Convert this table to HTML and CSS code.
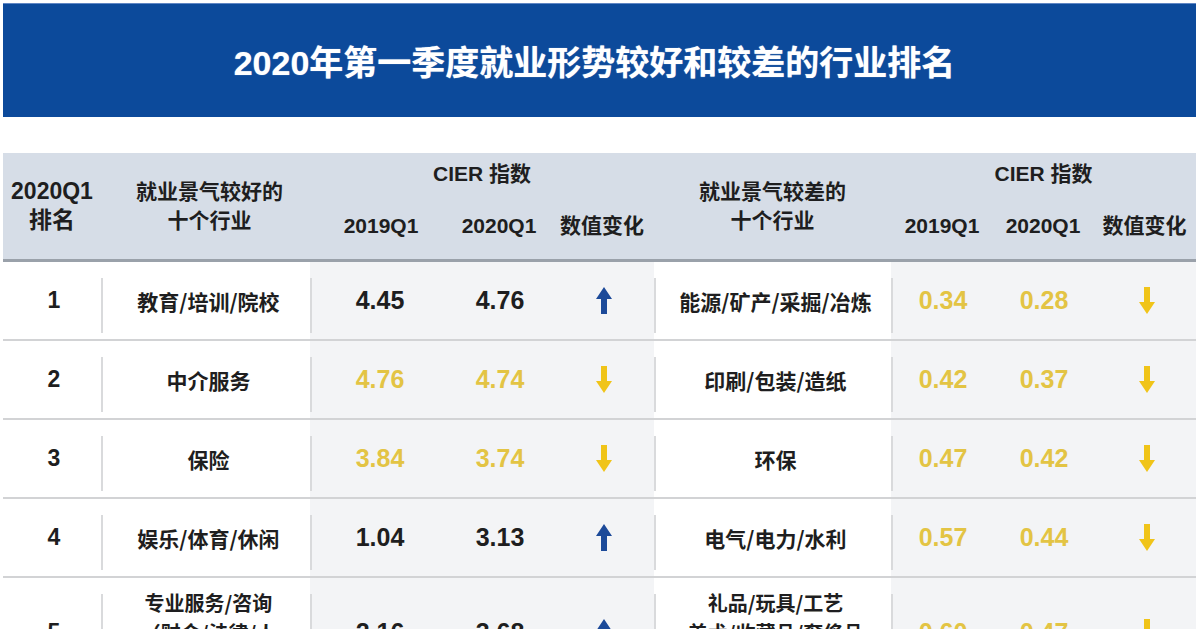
FILE: index.html
```html
<!DOCTYPE html>
<html lang="zh-CN">
<head>
<meta charset="utf-8">
<title>2020年第一季度就业形势较好和较差的行业排名</title>
<link rel="stylesheet" href="styles.css">
</head>
<body>
<div class="page">
  <header class="banner">
    <h1>2020年第一季度就业形势较好和较差的行业排名</h1>
  </header>

  <div class="table">
    <div class="thead">
      <div class="h-cell h-rank">2020Q1<br>排名</div>
      <div class="h-cell h-name">就业景气较好的<br>十个行业</div>
      <div class="h-cell h-cier">CIER 指数</div>
      <div class="h-cell h-sub c3">2019Q1</div>
      <div class="h-cell h-sub c4">2020Q1</div>
      <div class="h-cell h-sub c5">数值变化</div>
      <div class="h-cell h-name2">就业景气较差的<br>十个行业</div>
      <div class="h-cell h-cier2">CIER 指数</div>
      <div class="h-cell h-sub c7">2019Q1</div>
      <div class="h-cell h-sub c8">2020Q1</div>
      <div class="h-cell h-sub c9">数值变化</div>
    </div>

    <div class="row">
      <div class="cell w rank">1</div>
      <div class="cell w line name">教育/培训/院校</div>
      <div class="cell g line num">4.45</div>
      <div class="cell g num">4.76</div>
      <div class="cell g"><svg class="arrow up" viewBox="0 0 16 27"><path d="M8 0 L16 12 L11 12 L11 27 L5 27 L5 12 L0 12 Z"/></svg></div>
      <div class="cell w line name">能源/矿产/采掘/冶炼</div>
      <div class="cell g line num y">0.34</div>
      <div class="cell g num y">0.28</div>
      <div class="cell g"><svg class="arrow down" viewBox="0 0 16 27"><path d="M5 0 L11 0 L11 15 L16 15 L8 27 L0 15 L5 15 Z"/></svg></div>
    </div>

    <div class="row">
      <div class="cell w rank">2</div>
      <div class="cell w line name">中介服务</div>
      <div class="cell g line num y">4.76</div>
      <div class="cell g num y">4.74</div>
      <div class="cell g"><svg class="arrow down" viewBox="0 0 16 27"><path d="M5 0 L11 0 L11 15 L16 15 L8 27 L0 15 L5 15 Z"/></svg></div>
      <div class="cell w line name">印刷/包装/造纸</div>
      <div class="cell g line num y">0.42</div>
      <div class="cell g num y">0.37</div>
      <div class="cell g"><svg class="arrow down" viewBox="0 0 16 27"><path d="M5 0 L11 0 L11 15 L16 15 L8 27 L0 15 L5 15 Z"/></svg></div>
    </div>

    <div class="row">
      <div class="cell w rank">3</div>
      <div class="cell w line name">保险</div>
      <div class="cell g line num y">3.84</div>
      <div class="cell g num y">3.74</div>
      <div class="cell g"><svg class="arrow down" viewBox="0 0 16 27"><path d="M5 0 L11 0 L11 15 L16 15 L8 27 L0 15 L5 15 Z"/></svg></div>
      <div class="cell w line name">环保</div>
      <div class="cell g line num y">0.47</div>
      <div class="cell g num y">0.42</div>
      <div class="cell g"><svg class="arrow down" viewBox="0 0 16 27"><path d="M5 0 L11 0 L11 15 L16 15 L8 27 L0 15 L5 15 Z"/></svg></div>
    </div>

    <div class="row">
      <div class="cell w rank">4</div>
      <div class="cell w line name">娱乐/体育/休闲</div>
      <div class="cell g line num">1.04</div>
      <div class="cell g num">3.13</div>
      <div class="cell g"><svg class="arrow up" viewBox="0 0 16 27"><path d="M8 0 L16 12 L11 12 L11 27 L5 27 L5 12 L0 12 Z"/></svg></div>
      <div class="cell w line name">电气/电力/水利</div>
      <div class="cell g line num y">0.57</div>
      <div class="cell g num y">0.44</div>
      <div class="cell g"><svg class="arrow down" viewBox="0 0 16 27"><path d="M5 0 L11 0 L11 15 L16 15 L8 27 L0 15 L5 15 Z"/></svg></div>
    </div>

    <div class="row tall">
      <div class="cell w rank">5</div>
      <div class="cell w line name multi">专业服务/咨询<br>（财会/法律/人<br>力资源）</div>
      <div class="cell g line num">2.16</div>
      <div class="cell g num">3.68</div>
      <div class="cell g"><svg class="arrow up" viewBox="0 0 16 27"><path d="M8 0 L16 12 L11 12 L11 27 L5 27 L5 12 L0 12 Z"/></svg></div>
      <div class="cell w line name multi wide">礼品/玩具/工艺<br>美术/收藏品/奢侈品<br>/珠宝</div>
      <div class="cell g line num y">0.60</div>
      <div class="cell g num y">0.47</div>
      <div class="cell g"><svg class="arrow down" viewBox="0 0 16 27"><path d="M5 0 L11 0 L11 15 L16 15 L8 27 L0 15 L5 15 Z"/></svg></div>
    </div>
  </div>
</div>
</body>
</html>
```

FILE: styles.css
```css
:root {
  --cols: 98px 209px 138px 102px 104px 237px 102px 100px 103px;
}

* { box-sizing: border-box; }

body {
  margin: 0;
  background: #ffffff;
  font-family: "Liberation Sans", "Noto Sans CJK SC", sans-serif;
  color: #1e1e20;
}

.page {
  padding: 3px 4px 0 3px;
}

.banner {
  height: 114px;
  background: #0c4a9b;
  border-top: 1px solid #5f86c4;
  display: flex;
  align-items: center;
  justify-content: center;
}

.banner h1 {
  margin: 0;
  padding-top: 4px;
  padding-right: 10px;
  color: #ffffff;
  font-family: "Liberation Sans", "Noto Sans CJK SC", sans-serif;
  font-weight: 700;
  font-size: 34px;
  line-height: 1;
  letter-spacing: 0;
  text-shadow: 0 0 1px rgba(255, 255, 255, 0.6);
}

.table {
  margin-top: 36px;
}

.thead {
  display: grid;
  grid-template-columns: var(--cols);
  grid-template-rows: 38px 68px;
  background: #d6dde7;
  border-bottom: 3px solid #9aa1aa;
  font-weight: 700;
  font-size: 21px;
}

.h-cell {
  display: flex;
  align-items: center;
  justify-content: center;
  text-align: center;
  line-height: 29px;
}

.h-rank { grid-column: 1; grid-row: 1 / 3; font-size: 23px; }
.h-name { grid-column: 2; grid-row: 1 / 3; padding-left: 8px; }
.h-cier { grid-column: 3 / 6; grid-row: 1; padding-top: 2px; }
.h-name2 { grid-column: 6; grid-row: 1 / 3; }
.h-cier2 { grid-column: 7 / 10; grid-row: 1; padding-top: 2px; }
.h-sub { grid-row: 2; font-size: 21px; }
.c3 { grid-column: 3; padding-left: 4px; }
.c4 { grid-column: 4; }
.c5 { grid-column: 5; }
.c7 { grid-column: 7; }
.c8 { grid-column: 8; }
.c9 { grid-column: 9; }

.row {
  display: grid;
  grid-template-columns: var(--cols);
  min-height: 79px;
  border-bottom: 2px solid #d2d3d5;
}

.row.tall {
  min-height: 110px;
}

.cell {
  display: flex;
  align-items: center;
  justify-content: center;
  text-align: center;
}

.w { background-color: #ffffff; }
.g { background-color: #f3f4f6; }

.line {
  background-image: linear-gradient(#d9dadc, #d9dadc);
  background-repeat: no-repeat;
  background-size: 2px calc(100% - 22px);
  background-position: left 16px;
}

.rank {
  font-size: 23px;
  font-weight: 700;
  padding-left: 4px;
}

.name {
  font-family: "Noto Sans CJK SC", "Liberation Sans", sans-serif;
  font-size: 21px;
  font-weight: 700;
  line-height: 30px;
  padding-left: 6px;
}

.name.multi {
  font-size: 20px;
  padding-top: 2px;
}

.num {
  font-size: 25px;
  font-weight: 700;
  padding-left: 2px;
}

.num.y {
  color: #e3c444;
}

.arrow {
  width: 16px;
  height: 27px;
  margin-left: 4px;
}

.arrow.up { fill: #1c4a99; }
.arrow.down { fill: #f0c419; }
```
